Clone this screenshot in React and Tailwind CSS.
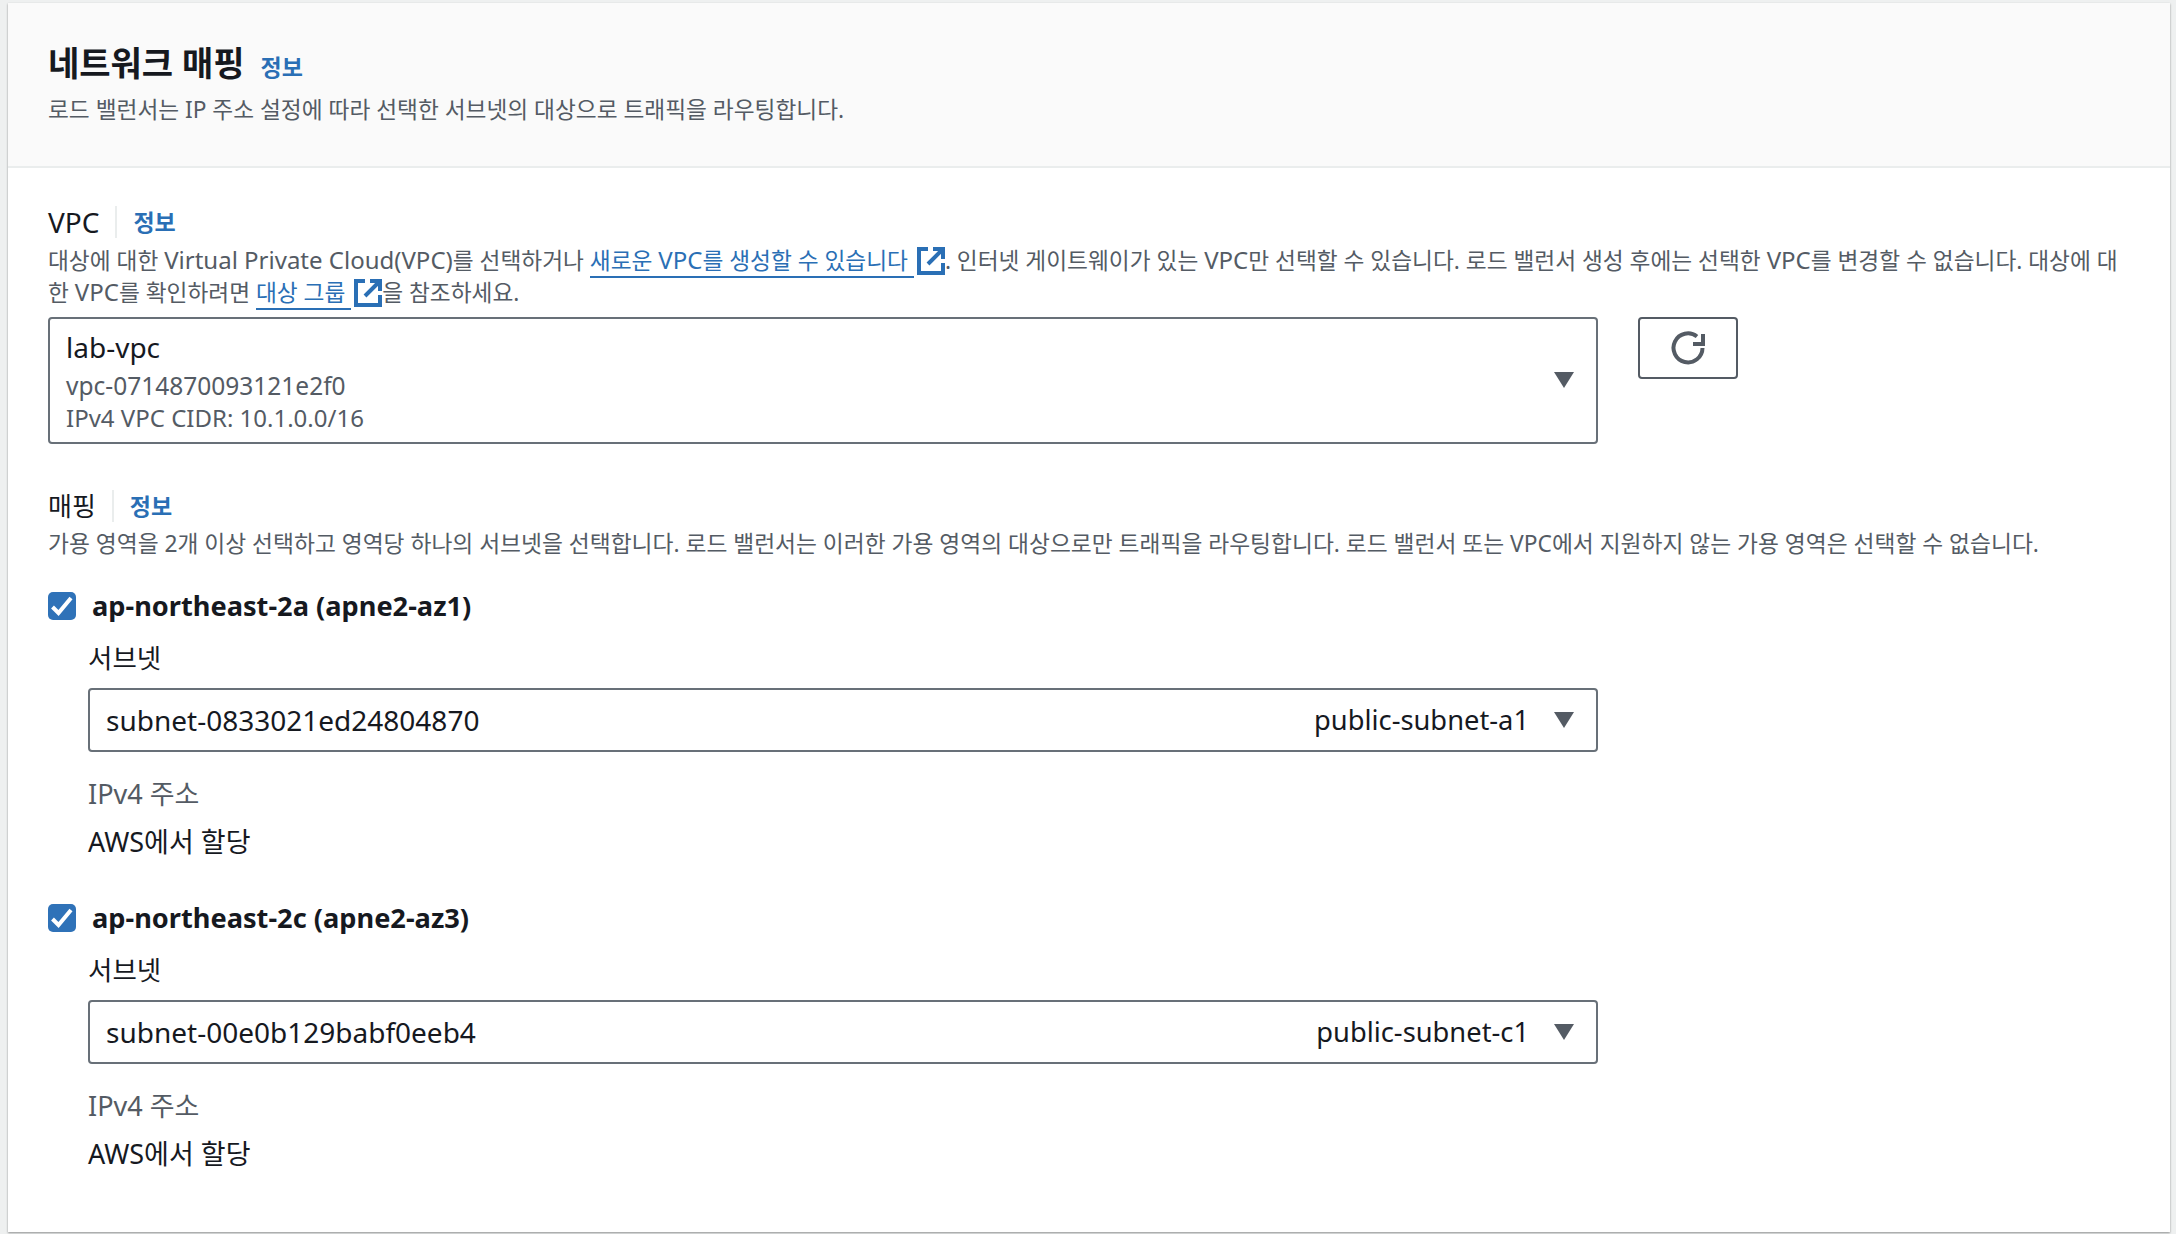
import React from 'react';

const InfoLink = ({ className = '' }) => (
  <a className={`text-[23px] leading-[32px] font-bold text-[#2a6fb5] ${className}`}>정보</a>
);

const ExternalIcon = () => (
  <svg viewBox="0 0 28 28" className="inline-block w-[28px] h-[28px] align-[-6px] ml-[3px]" fill="none" stroke="#2a6fb5" strokeWidth="4">
    <path d="M11 2H2v24h24V16" />
    <path d="M11 17 25 3M16 2h10v10" />
  </svg>
);

const Caret = () => (
  <svg viewBox="0 0 20 16" className="w-[20px] h-[16px]" fill="#545b64">
    <path d="M0 0h20L10 16z" />
  </svg>
);

const RefreshIcon = () => (
  <svg viewBox="0 0 36 36" className="w-[36px] h-[36px]" fill="none" stroke="#545b64" strokeWidth="4">
    <path d="M32.5 18A14.5 14.5 0 1 1 27 6.5" />
    <path d="M33 4v12M23 14h12" />
  </svg>
);

const CheckBox = () => (
  <span className="w-[28px] h-[28px] rounded-[5px] bg-[#2f72b8] flex items-center justify-center">
    <svg viewBox="0 0 28 28" className="w-[28px] h-[28px]" fill="none" stroke="#fff" strokeWidth="4">
      <path d="M4.5 15l6 6L23 6" />
    </svg>
  </span>
);

// latin words in the descriptions run a bit wider than the hangul around them
const Latin = ({ children }) => <span className="text-[24px] leading-none">{children}</span>;

const FieldLabel = ({ children, size }) => (
  <div className="flex items-center h-[32px]">
    <span className={`${size} leading-[32px] text-[#16191f]`}>{children}</span>
    <span className="w-[2px] h-[32px] bg-[#eaeded] ml-[16px] mr-[16px]" />
    <InfoLink />
  </div>
);

const Zone = ({ name, subnetId, subnetName }) => (
  <div className="h-[312px]">
    <div className="flex items-center gap-[16px] h-[32px]">
      <CheckBox />
      <span className="text-[27.2px] leading-[32px] font-bold text-[#16191f]">{name}</span>
    </div>
    <div className="pl-[40px]">
      <div className="text-[26.5px] leading-[32px] text-[#16191f] mt-[20px]">서브넷</div>
      <div className="mt-[14px] h-[64px] border-2 border-[#687078] rounded-[4px] flex items-center pl-[16px] pr-[22px]">
        <span className="text-[28px] leading-[32px] text-[#16191f]">{subnetId}</span>
        <span className="ml-auto text-[27.3px] leading-[32px] text-[#16191f]">{subnetName}</span>
        <span className="ml-[25px]"><Caret /></span>
      </div>
      <div className="text-[27px] leading-[32px] text-[#545b64] mt-[26px]">IPv4 주소</div>
      <div className="text-[27px] leading-[32px] text-[#16191f] mt-[16px]">AWS에서 할당</div>
    </div>
  </div>
);

export default function App() {
  return (
    <div className="w-[2176px] h-[1234px] bg-[#eef0f0] pt-[3px] pl-[8px] pr-[6px] overflow-hidden font-['Noto_Sans','Noto_Sans_CJK_KR',sans-serif]">
      <section className="bg-white h-[1229px] shadow-[0_1px_2px_rgba(0,0,0,0.4)]">
        <header className="h-[165px] bg-[#fafafa] border-b-2 border-[#eaeded] pl-[40px] pt-[42px]">
          <div className="flex items-center gap-[16px] h-[36px]">
            <h2 className="text-[34px] leading-[36px] font-bold text-[#16191f]">네트워크 매핑</h2>
            <InfoLink className="mt-[8px]" />
          </div>
          <p className="text-[22.7px] leading-[32px] text-[#545b64] mt-[13px]">로드 밸런서는 IP 주소 설정에 따라 선택한 서브넷의 대상으로 트래픽을 라우팅합니다.</p>
        </header>
        <div className="pl-[40px] pr-[40px] pt-[38px]">
          <FieldLabel size="text-[28px]">VPC</FieldLabel>
          <p className="text-[22.7px] leading-[32px] text-[#545b64] mt-[7px]">
            대상에 대한 <Latin>Virtual Private Cloud(VPC)</Latin>를 선택하거나{' '}
            <a className="text-[#2a6fb5] border-b-2 border-[#2a6fb5]">새로운 <Latin>VPC</Latin>를 생성할 수 있습니다 </a>
            <ExternalIcon />. 인터넷 게이트웨이가 있는 <Latin>VPC</Latin>만 선택할 수 있습니다. 로드 밸런서 생성 후에는 선택한 <Latin>VPC</Latin>를 변경할 수 없습니다. 대상에 대한 <Latin>VPC</Latin>를 확인하려면{' '}
            <a className="text-[#2a6fb5] border-b-2 border-[#2a6fb5]">대상 그룹 </a>
            <ExternalIcon />을 참조하세요.
          </p>
          <div className="flex items-start gap-[40px] mt-[8px]">
            <div className="w-[1550px] h-[127px] border-2 border-[#687078] rounded-[4px] relative pl-[16px] pt-[10px]">
              <div className="text-[28px] leading-[36px] text-[#16191f]">lab-vpc</div>
              <div className="text-[24.5px] leading-[32px] text-[#545b64] mt-[5px]">vpc-0714870093121e2f0</div>
              <div className="text-[24px] leading-[32px] text-[#545b64]">IPv4 VPC CIDR: 10.1.0.0/16</div>
              <span className="absolute right-[22px] top-[53px]"><Caret /></span>
            </div>
            <button className="w-[100px] h-[62px] border-2 border-[#545b64] rounded-[4px] flex items-center justify-center">
              <RefreshIcon />
            </button>
          </div>
          <div className="mt-[46px]"><FieldLabel size="text-[26px]">매핑</FieldLabel></div>
          <p className="text-[22.75px] leading-[32px] text-[#545b64] mt-[6px]">가용 영역을 2개 이상 선택하고 영역당 하나의 서브넷을 선택합니다. 로드 밸런서는 이러한 가용 영역의 대상으로만 트래픽을 라우팅합니다. 로드 밸런서 또는 VPC에서 지원하지 않는 가용 영역은 선택할 수 없습니다.</p>
          <div className="mt-[30px] w-[1550px]">
            <Zone name="ap-northeast-2a (apne2-az1)" subnetId="subnet-0833021ed24804870" subnetName="public-subnet-a1" />
            <Zone name="ap-northeast-2c (apne2-az3)" subnetId="subnet-00e0b129babf0eeb4" subnetName="public-subnet-c1" />
          </div>
        </div>
      </section>
    </div>
  );
}
